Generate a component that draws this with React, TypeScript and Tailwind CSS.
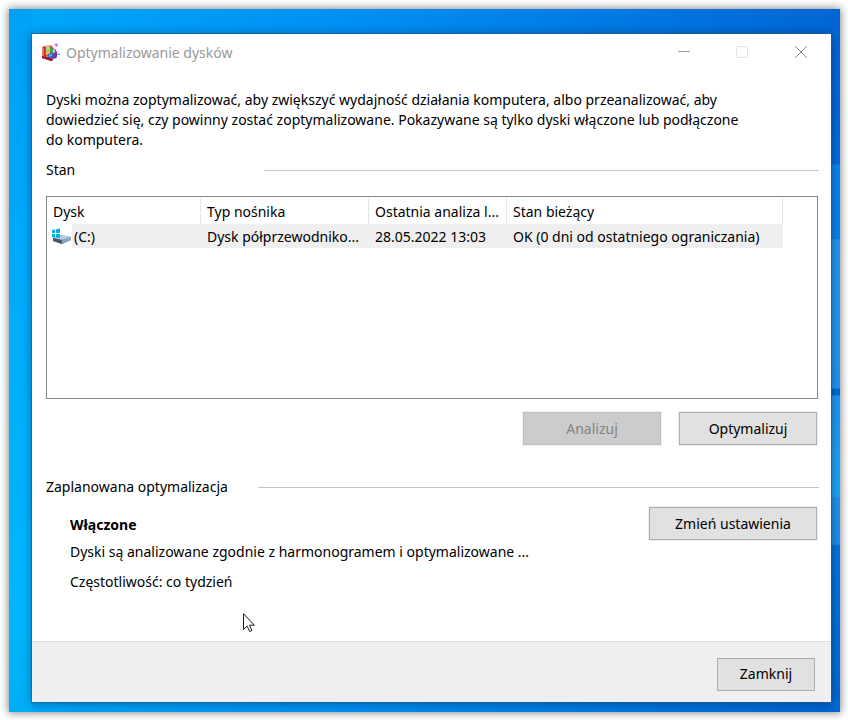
import React from "react";

const COLUMNS = ["Dysk", "Typ nośnika", "Ostatnia analiza l...", "Stan bieżący"];

const buttonBase =
  "h-[33px] border border-[#adadad] bg-[#e1e1e1] text-black outline outline-[#f0f0f0]";

function DefragIcon() {
  return (
    <svg className="h-[18px] w-[18px] shrink-0" viewBox="0 0 18 18" aria-hidden="true">
      <path d="M0 4l3-1v10l8 2v2.500L9 18l-9-3z" fill="#c4282c" />
      <path d="M0 4l2 .5v9L0 13z" fill="#e87870" />
      <path d="M3 3l5-1 3 2v9l-4 1-4-1z" fill="#d9482f" />
      <path d="M3 3l4-1 1 1-4 1z" fill="#f4d2c4" />
      <path d="M4 4l4-1v4l-4 1z" fill="#9adf9a" />
      <path d="M4 8l4-1v4l-4 1z" fill="#e8c33c" />
      <path d="M8 5l3 1v4l-3-1z" fill="#2fa84c" />
      <path d="M6 11l4-1 3 2v3l-4 1-3-2z" fill="#2467dc" />
      <path d="M7 12l3-1v2l-3 1z" fill="#68b5ff" />
      <path d="M11 5l3 2 1.500 4-1 4-3 1z" fill="#7d2fa8" />
      <path d="M11 6l2 1v3l-2-1z" fill="#e7c8f2" />
      <path d="M12 1l3-1 1 3-2 1z" fill="#dca6f2" />
      <path d="M13 1.500l2-.5.500 1.500-1.500.5z" fill="#b25bd8" />
      <path d="M0 13l10 3v2L0 15z" fill="#a5141f" />
      <path d="M16 11h2v1h-2z" fill="#28a9e0" />
    </svg>
  );
}

function DriveIcon() {
  return (
    <svg className="h-4 w-5 shrink-0" viewBox="0 0 20 16" aria-hidden="true">
      <path d="M1 10l8-3 10 2v3l-9 4-9-3z" fill="#6f8ba3" />
      <path d="M1 10l8-3 10 2-9 3z" fill="#b5cbdd" />
      <path d="M1 10l9 2v4l-9-3z" fill="#46596b" />
      <path d="M10 12l9-3v3l-9 4z" fill="#87a6c2" />
      <path d="M0 2l3-.5V5H0zM4 1.300L8 .5V5H4zM0 6h3v3.500L0 9zM4 6h4v4l-4-.5z" fill="#00aeef" />
    </svg>
  );
}

function GroupHeading({ id, text, gap }: { id: string; text: string; gap: string }) {
  return (
    <div className={`flex items-center ${gap}`}>
      <h2 id={id} className="whitespace-nowrap">{text}</h2>
      <div className="h-px flex-1 bg-[#c4c4c4]" />
    </div>
  );
}

function TitleBar() {
  return (
    <header className="flex h-9 items-center pl-[10px]">
      <DefragIcon />
      <h1 className="ml-[6px] flex-1 pt-px text-[#999999]">Optymalizowanie dysków</h1>
      <button type="button" aria-label="Minimalizuj" className="flex h-9 w-[58px] items-center justify-center">
        <svg className="h-3 w-3" viewBox="0 0 12 12"><path d="M0 5.500h12" stroke="#999" fill="none" /></svg>
      </button>
      <button type="button" aria-label="Maksymalizuj" disabled className="flex h-9 w-[58px] items-center justify-center">
        <svg className="h-3 w-3" viewBox="0 0 12 12"><path d="M.5.500h11v11H.500z" stroke="#e5e5e5" fill="none" /></svg>
      </button>
      <button type="button" aria-label="Zamknij okno" className="flex h-9 w-[60px] items-center justify-center">
        <svg className="h-3 w-3" viewBox="0 0 12 12"><path d="M0 0l12 12M12 0L0 12" stroke="#8c8c8c" fill="none" /></svg>
      </button>
    </header>
  );
}

function DriveTable() {
  return (
    <div className="h-[203px] border border-[#828790] pt-px">
      <table aria-labelledby="status" className="w-[736px] table-fixed border-collapse text-left">
        <colgroup>
          <col className="w-[154px]" />
          <col className="w-[168px]" />
          <col className="w-[138px]" />
          <col />
        </colgroup>
        <thead>
          <tr className="h-[26px]">
            {COLUMNS.map((name) => (
              <th key={name} scope="col" className="p-0 font-normal">
                <div className="flex h-[26px] items-center overflow-hidden border-r border-[#e5e5e5] pt-[2px] pl-[6px] whitespace-nowrap">{name}</div>
              </th>
            ))}
          </tr>
        </thead>
        <tbody>
          <tr className="h-6 whitespace-nowrap">
            <td className="p-0">
              <div className="flex h-6 items-center pl-[5px]">
                <DriveIcon />
                <span className="h-6 flex-1 bg-[#efefef] pt-[3px] pl-[2px]">(C:)</span>
              </div>
            </td>
            <td className="bg-[#efefef] p-0 pt-[2px] pl-[6px]">Dysk półprzewodniko...</td>
            <td className="bg-[#efefef] p-0 pt-[2px] pl-[6px]">28.05.2022 13:03</td>
            <td className="bg-[#efefef] p-0 pt-[2px] pl-[6px]">OK (0 dni od ostatniego ograniczania)</td>
          </tr>
        </tbody>
      </table>
    </div>
  );
}

function Cursor() {
  return (
    <svg className="absolute top-[579px] left-[211px] h-5 w-3" viewBox="0 0 12 20" aria-hidden="true">
      <path d="M.5.700v15.800l3.600-3.400 2.600 5.400 2.200-1-2.500-5.300h5z" fill="#fff" stroke="#1a1a24" />
    </svg>
  );
}

export default function App() {
  return (
    <div className="min-h-screen bg-white p-[9px] pr-2 pb-2 font-['Noto_Sans',sans-serif] text-[14px] leading-5 text-black">
      <div className="relative bg-[linear-gradient(90deg,#00a8fa,#0090f4_40%,#0065d4)] pt-[25px] pr-[9px] pb-[10px] pl-[23px] shadow-[0_0_8px_1px_rgba(0,0,0,0.45)]">
        <div className="absolute inset-y-0 right-0 w-[9px] bg-[linear-gradient(180deg,#0065d4,#006be0_155px,#0885f0_156px,#0880ea_230px,#2496f0_231px,#2094f2_379px,#0068d4_380px,#0068d4_386px,#2094f4_387px,#1ca4f4_487px,#2490ee_489px,#1c8cec_535px,#0074dc_537px,#0068d4)]" />
        <div className="absolute inset-y-0 left-0 w-[23px] bg-[linear-gradient(180deg,#00a0f6,#00aafc_35%,#00b6ff_85%,#00aef8)]" />
        <main className="relative bg-white shadow-[0_1px_10px_rgba(0,0,0,0.4)] outline outline-[#1c5c8c]/60">
          <TitleBar />
          <div className="pt-5 pr-3 pl-[14px]">
            <p className="whitespace-nowrap">
              Dyski można zoptymalizować, aby zwiększyć wydajność działania komputera, albo przeanalizować, aby
              <br />
              dowiedzieć się, czy powinny zostać zoptymalizowane. Pokazywane są tylko dyski włączone lub podłączone
              <br />
              do komputera.
            </p>
            <section className="mt-[10px]">
              <GroupHeading id="status" text="Stan" gap="gap-[189px]" />
              <div className="mt-4 mr-px">
                <DriveTable />
                <div className="mt-[13px] mr-px flex justify-end gap-[18px]">
                  <button type="button" disabled className="h-[33px] w-[138px] border border-[#bfbfbf] bg-[#cccccc] text-[#838383] outline outline-[#f0f0f0]">
                    Analizuj
                  </button>
                  <button type="button" className={`${buttonBase} w-[138px]`}>Optymalizuj</button>
                </div>
              </div>
            </section>
            <section className="mt-8">
              <GroupHeading id="schedule" text="Zaplanowana optymalizacja" gap="gap-[30px]" />
              <div className="mt-[10px] mr-[2px] flex h-[134px] items-start justify-between pl-6">
                <div className="pt-2 whitespace-nowrap">
                  <p className="font-bold">Włączone</p>
                  <p className="mt-[7px]">Dyski są analizowane zgodnie z harmonogramem i optymalizowane ...</p>
                  <p className="mt-[10px]">Częstotliwość: co tydzień</p>
                </div>
                <button type="button" className={`${buttonBase} w-[168px]`}>Zmień ustawienia</button>
              </div>
            </section>
          </div>
          <footer className="flex h-[61px] items-center justify-end border-t border-[#dfdfdf] bg-[#efefef] pt-1 pr-4">
            <button type="button" className={`${buttonBase} w-[98px]`}>Zamknij</button>
          </footer>
          <Cursor />
        </main>
      </div>
    </div>
  );
}
